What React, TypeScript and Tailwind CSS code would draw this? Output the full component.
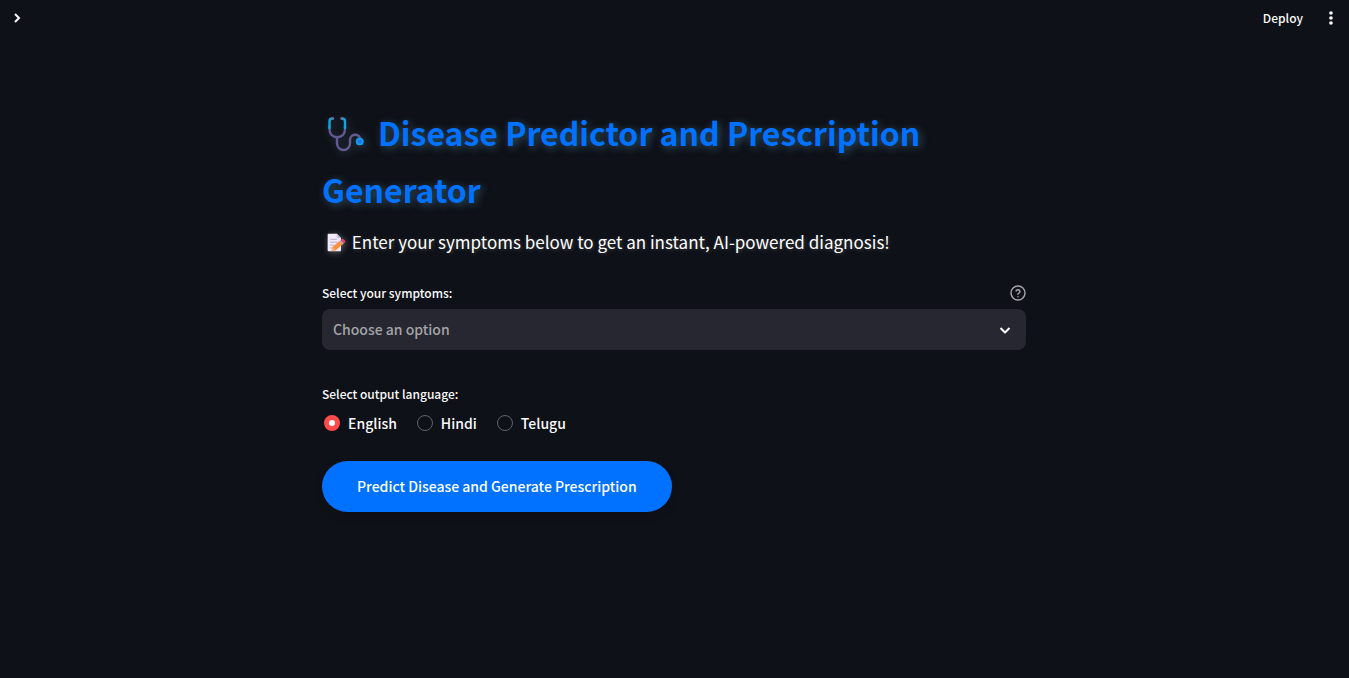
import { useState } from "react";

const languages = ["English", "Hindi", "Telugu"];

function Stethoscope() {
  return (
    <svg
      viewBox="0 0 48 48"
      aria-hidden="true"
      className="mr-2 inline-block size-12 align-middle drop-shadow-[2px_2px_4px_rgba(110,180,220,0.3)]"
      fill="none"
      strokeLinecap="round"
    >
      <path d="M15 24.500v6a6.500 6.500 0 0 0 13 0v-3.500a5.200 5.200 0 0 1 10.200-1.500l.3 1" stroke="#635994" strokeWidth="2.400" />
      <path d="M7.500 13v3c0 5 3 8.200 7.750 8.200S23 21 23 16v-3" stroke="#635994" strokeWidth="2.400" />
      <path d="M10.500 5.500c-2.200 0-3 1-3 3v6.500M20 5.500c2.200 0 3 1 3 3v6.500" stroke="#12a5dc" strokeWidth="2.400" />
      <path d="M10.500 5.500h.6M20 5.500h-.6" stroke="#766b92" strokeWidth="2.400" />
      <circle cx="37.700" cy="28.500" r="3.800" fill="#1b78ee" />
      <circle cx="37.700" cy="28.500" r="3.100" stroke="#149fe8" strokeWidth="1.500" />
    </svg>
  );
}

function Memo() {
  return (
    <svg
      viewBox="0 0 24 24"
      aria-hidden="true"
      className="mr-0.5 mb-1 ml-1 inline-block size-5 align-middle drop-shadow-[1px_1px_3px_rgba(255,255,255,0.3)]"
    >
      <path d="M3 1h10l5 5v15a1 1 0 0 1-1 1H3a1 1 0 0 1-1-1V2a1 1 0 0 1 1-1z" fill="#f1eafa" />
      <path d="M13 1v4a1 1 0 0 0 1 1h4z" fill="#c9bdd8" />
      <path d="M5 7.500h8M5 11h9M5 14.500h5M5 18h2" stroke="#b9adc9" strokeWidth="1.200" />
      <path d="M8 16.500 17 9l3.800 4L11.500 21l-5 1z" fill="#fb923c" />
      <path d="m8 16.500 3.500 4.500-5 1z" fill="#f9b27a" />
      <path d="m16.300 9.600 1.400-1.200 3.800 4-1.400 1.200z" fill="#b9a6c9" />
      <path d="m17.700 8.400 1.300-1.100a1.500 1.500 0 0 1 2 .1l1.800 1.900a1.500 1.500 0 0 1-.1 2L21.500 12.400z" fill="#f43f6e" />
    </svg>
  );
}

export default function App() {
  const [language, setLanguage] = useState("English");

  return (
    <div className="flex min-h-screen flex-col bg-[#0e1117] font-['Noto_Sans_CJK_SC',sans-serif] text-[#fafafa]">
      <header className="flex h-9 items-center justify-between pr-1.5 pl-2">
        <button type="button" aria-label="Open sidebar" className="grid size-5 place-items-center">
          <svg viewBox="0 0 20 20" className="size-5" fill="none" stroke="currentColor" strokeWidth="2">
            <path d="m7 6 4 4-4 4" />
          </svg>
        </button>
        <div className="flex items-center gap-4">
          <button type="button" className="text-[12px] leading-5 font-medium">
            Deploy
          </button>
          <button type="button" aria-label="Main menu" className="grid size-6 place-items-center">
            <svg viewBox="0 0 24 24" className="size-5" fill="currentColor">
              <circle cx="12" cy="6" r="2.200" />
              <circle cx="12" cy="12" r="2.200" />
              <circle cx="12" cy="18" r="2.200" />
            </svg>
          </button>
        </div>
      </header>

      <main className="mx-auto w-full max-w-[705px] pt-[68px] pr-px">
        <h1 className="text-[32px] leading-[56px] font-bold text-[#0072ff] [text-shadow:2px_2px_8px_rgba(110,180,220,0.4)]">
          <Stethoscope />
          Disease Predictor and Prescription Generator
        </h1>
        <p className="mt-[9px] text-[17px] leading-8 text-white [text-shadow:1px_1px_4px_rgba(255,255,255,0.2)]">
          <Memo />
          {" Enter your symptoms below to get an instant, AI-powered diagnosis!"}
        </p>

        <section className="mt-[23px]">
          <div className="flex h-6 items-center justify-between">
            <label htmlFor="symptoms" className="text-[12px] font-medium">
              Select your symptoms:
            </label>
            <button type="button" aria-label="Help" className="text-[#a3a4a9]">
              <svg viewBox="0 0 24 24" className="size-4" fill="none" stroke="currentColor" strokeWidth="2.200" strokeLinecap="round" strokeLinejoin="round">
                <circle cx="12" cy="12" r="10.500" />
                <path d="M9.090 9a3 3 0 0 1 5.830 1c0 2-3 2-3 4" />
                <path d="M12 17.500h.010" />
              </svg>
            </button>
          </div>
          <div className="mt-1 grid items-center">
            <select
              id="symptoms"
              defaultValue=""
              className="col-start-1 row-start-1 h-[41px] w-full appearance-none rounded-lg bg-[#262730] pr-10 pl-[11px] text-[14px] font-medium text-[#a3a4a9]"
            >
              <option value="">Choose an option</option>
            </select>
            <svg
              viewBox="0 0 20 20"
              aria-hidden="true"
              className="pointer-events-none col-start-1 row-start-1 mr-[11px] size-5 justify-self-end"
              fill="none"
              stroke="currentColor"
              strokeWidth="2"
              strokeLinejoin="round"
            >
              <path d="m5.500 8 4.500 4.500L14.500 8" />
            </svg>
          </div>
        </section>

        <fieldset className="mt-8">
          <legend className="text-[12px] leading-6 font-medium">Select output language:</legend>
          <div className="mt-[5px] flex items-center gap-[18px]">
            {languages.map((name) => (
              <label key={name} className="flex items-center gap-2 text-[14px] leading-6 font-medium">
                <input
                  type="radio"
                  name="language"
                  value={name}
                  checked={language === name}
                  onChange={() => setLanguage(name)}
                  className="ml-0.5 size-4 appearance-none rounded-full border border-[#60626a] checked:border-5 checked:border-[#ff4b4b] checked:bg-white"
                />
                {name}
              </label>
            ))}
          </div>
        </fieldset>

        <button
          type="button"
          className="mt-[26px] h-[51px] rounded-full bg-[#0072ff] px-[35px] text-[14px] font-medium text-white shadow-[0_4px_10px_rgba(0,0,0,0.1)]"
        >
          Predict Disease and Generate Prescription
        </button>
      </main>
    </div>
  );
}
